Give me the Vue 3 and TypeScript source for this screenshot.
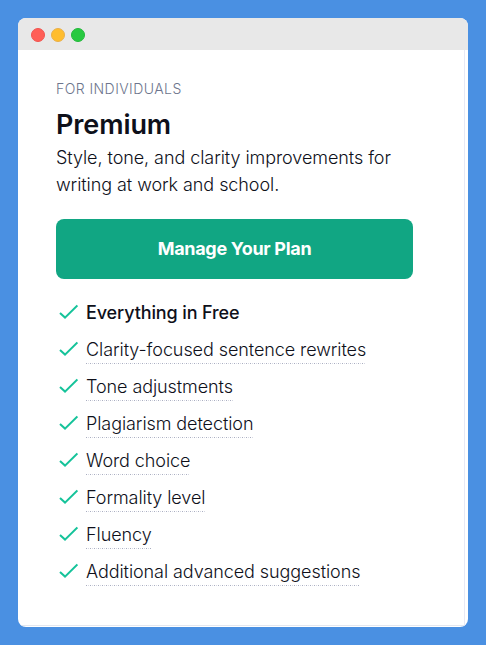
<script setup lang="ts">
interface Feature {
  label: string
  strong?: boolean
}

const features: Feature[] = [
  { label: 'Everything in Free', strong: true },
  { label: 'Clarity-focused sentence rewrites' },
  { label: 'Tone adjustments' },
  { label: 'Plagiarism detection' },
  { label: 'Word choice' },
  { label: 'Formality level' },
  { label: 'Fluency' },
  { label: 'Additional advanced suggestions' },
]
</script>

<template>
  <main class="backdrop">
    <section class="window">
      <header class="titlebar">
        <span class="dot red"></span>
        <span class="dot yellow"></span>
        <span class="dot green"></span>
      </header>
      <div class="plan">
        <p class="eyebrow">FOR INDIVIDUALS</p>
        <h2 class="title">Premium</h2>
        <p class="summary">Style, tone, and clarity improvements for writing at work and school.</p>
        <button class="cta" type="button">Manage Your Plan</button>
        <ul class="features">
          <li v-for="feature in features" :key="feature.label" class="feature">
            <svg class="check" width="20" height="16" viewBox="0 0 20 16" aria-hidden="true">
              <path d="M2 8.9 L7 13.6 L19.4 1.4" />
            </svg>
            <span :class="feature.strong ? 'strong' : 'hint'">{{ feature.label }}</span>
          </li>
        </ul>
      </div>
    </section>
  </main>
</template>

<style>
body {
  margin: 0;
  background: #4a90e2;
}
</style>

<style scoped>
.backdrop {
  box-sizing: border-box;
  height: 645px;
  padding: 18px;
  background: #4a90e2;
  font-family: Inter, "Liberation Sans", sans-serif;
  color: #0e101a;
}

.window {
  display: flex;
  flex-direction: column;
  height: 609px;
  border-radius: 8px;
  overflow: hidden;
  background: #fff;
}

.titlebar {
  display: flex;
  flex: none;
  align-items: center;
  gap: 6px;
  box-sizing: border-box;
  height: 32px;
  padding: 2px 13px 0;
  background: #e8e8e8;
}

.dot {
  box-sizing: border-box;
  width: 14px;
  height: 14px;
  border-radius: 50%;
}

.red {
  background: #ff5f57;
  border: 1px solid #f1544f;
}

.yellow {
  background: #ffbd2e;
  border: 1px solid #eab04a;
}

.green {
  background: #28c940;
  border: 1px solid #22b83a;
}

.plan {
  flex: 1;
  box-sizing: border-box;
  margin: 0 3px 1px 0;
  padding: 29px 51px 0 38px;
  border-right: 1px solid #e7e9f5;
  border-bottom: 1px solid #e3e7ef;
}

.eyebrow {
  margin: 0;
  font-size: 14px;
  line-height: 20px;
  font-weight: 300;
  letter-spacing: 0.44px;
  color: #6d758d;
}

.title {
  margin: 8px 0 0;
  font-size: 27px;
  line-height: 36px;
  font-weight: 600;
  letter-spacing: -0.1px;
}

.summary {
  width: 357px;
  margin: 1px 0 0;
  font-size: 18px;
  line-height: 27px;
  font-weight: 300;
  letter-spacing: -0.07px;
}

.cta {
  display: block;
  width: 357px;
  height: 60px;
  margin: 21px 0 0;
  padding: 0;
  border: 0;
  border-radius: 8px;
  background: #11a683;
  color: #fff;
  font: 700 18px/60px Inter, "Liberation Sans", sans-serif;
  letter-spacing: -0.3px;
}

.features {
  margin: 20px 0 0;
  padding: 0;
  list-style: none;
}

.feature {
  display: flex;
  align-items: flex-start;
  height: 37px;
  font-size: 18px;
  line-height: 27px;
  font-weight: 300;
  letter-spacing: -0.08px;
}

.check {
  flex: none;
  margin: 5px 8px 0 2px;
  fill: none;
  stroke: #15c39a;
  stroke-width: 2;
}

.strong {
  font-weight: 500;
  letter-spacing: -0.12px;
}

.hint {
  height: 28px;
  background: repeating-linear-gradient(
      90deg,
      #a9adc0 0 1px,
      transparent 1px 2px,
      #d5d7e2 2px 3px,
      transparent 3px 4px
    )
    left bottom / 100% 1px no-repeat;
}
</style>
